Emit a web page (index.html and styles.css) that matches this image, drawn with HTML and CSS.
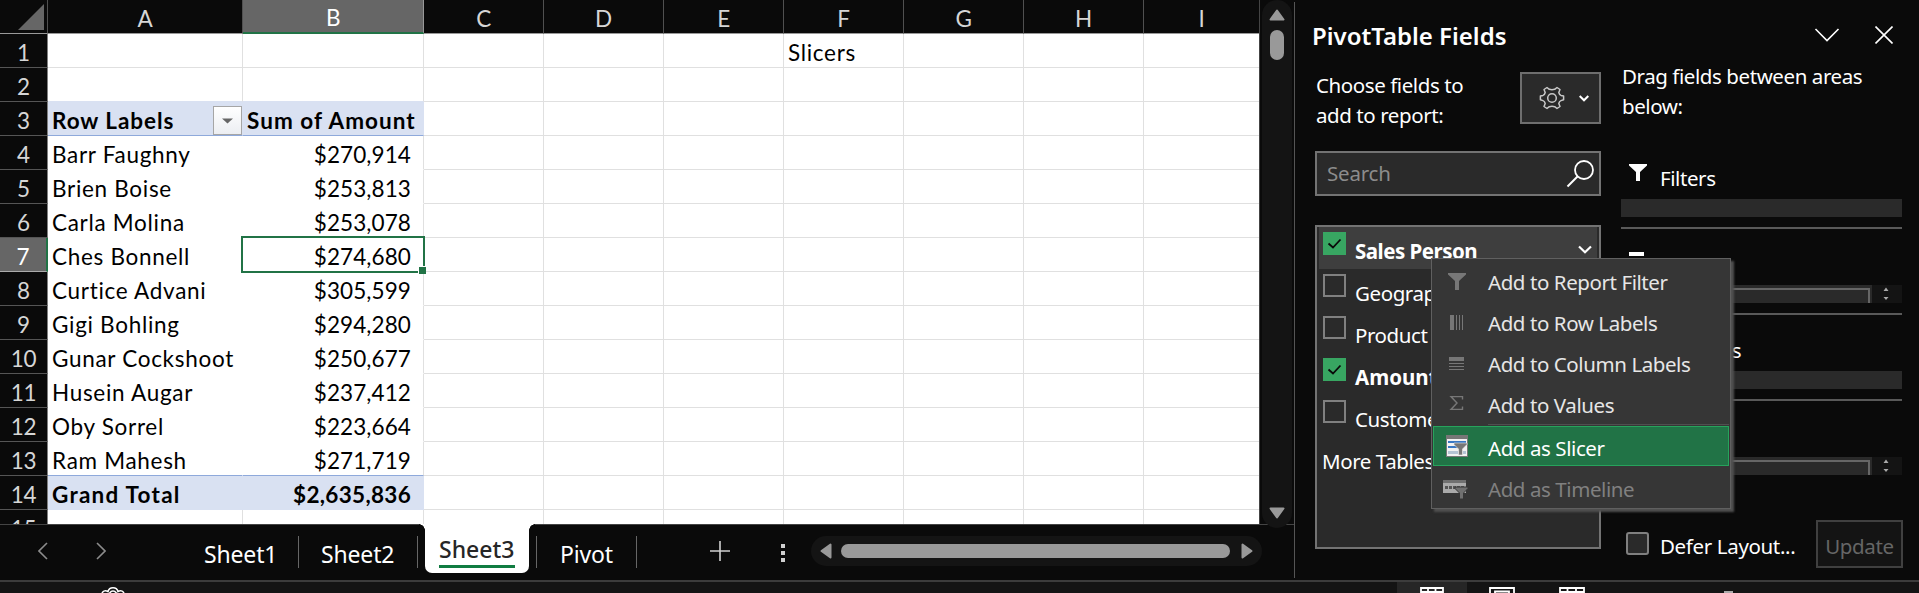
FILE: index.html
```html
<!DOCTYPE html>
<html lang="en">
<head>
<meta charset="utf-8">
<title>PivotTable Fields</title>
<link rel="stylesheet" href="styles.css">
</head>
<body>
<div class="app">
<main class="book">
  <div class="sheet-area">
    <div class="sheet">
      <table class="cells">
        <colgroup><col class="c-num"><col class="c-a"><col class="c-b"><col class="c-n"><col class="c-n"><col class="c-n"><col class="c-n"><col class="c-n"><col class="c-n"><col class="c-last"></colgroup>
        <tr class="head"><th class="corner"><svg width="48" height="33" viewBox="0 0 48 33"><path d="M44 4V30H18Z" fill="#666"/></svg></th><th>A</th><th class="picked">B</th><th>C</th><th>D</th><th>E</th><th>F</th><th>G</th><th>H</th><th>I</th></tr>
        <tr><th>1</th><td></td><td></td><td></td><td></td><td></td><td>Slicers</td><td></td><td></td><td></td></tr>
        <tr class="above"><th>2</th><td></td><td></td><td></td><td></td><td></td><td></td><td></td><td></td><td></td></tr>
        <tr class="band top"><th>3</th><td><div class="labelcell"><span>Row Labels</span><span class="filter"><svg width="27" height="27" viewBox="0 0 27 27"><path d="M8 11.500H19L13.500 16.500Z" fill="#666"/></svg></span></div></td><td class="hd">Sum of Amount</td><td></td><td></td><td></td><td></td><td></td><td></td><td></td></tr>
        <tr class="data"><th>4</th><td>Barr Faughny</td><td>$270,914</td><td></td><td></td><td></td><td></td><td></td><td></td><td></td></tr>
        <tr class="data"><th>5</th><td>Brien Boise</td><td>$253,813</td><td></td><td></td><td></td><td></td><td></td><td></td><td></td></tr>
        <tr class="data"><th>6</th><td>Carla Molina</td><td>$253,078</td><td></td><td></td><td></td><td></td><td></td><td></td><td></td></tr>
        <tr class="data"><th class="picked">7</th><td>Ches Bonnell</td><td class="active">$274,680</td><td></td><td></td><td></td><td></td><td></td><td></td><td></td></tr>
        <tr class="data"><th>8</th><td>Curtice Advani</td><td>$305,599</td><td></td><td></td><td></td><td></td><td></td><td></td><td></td></tr>
        <tr class="data"><th>9</th><td>Gigi Bohling</td><td>$294,280</td><td></td><td></td><td></td><td></td><td></td><td></td><td></td></tr>
        <tr class="data"><th>10</th><td>Gunar Cockshoot</td><td>$250,677</td><td></td><td></td><td></td><td></td><td></td><td></td><td></td></tr>
        <tr class="data"><th>11</th><td>Husein Augar</td><td>$237,412</td><td></td><td></td><td></td><td></td><td></td><td></td><td></td></tr>
        <tr class="data"><th>12</th><td>Oby Sorrel</td><td>$223,664</td><td></td><td></td><td></td><td></td><td></td><td></td><td></td></tr>
        <tr class="data end"><th>13</th><td>Ram Mahesh</td><td>$271,719</td><td></td><td></td><td></td><td></td><td></td><td></td><td></td></tr>
        <tr class="band total"><th>14</th><td>Grand Total</td><td>$2,635,836</td><td></td><td></td><td></td><td></td><td></td><td></td><td></td></tr>
        <tr><th>15</th><td></td><td></td><td></td><td></td><td></td><td></td><td></td><td></td><td></td></tr>
      </table>
    </div>
    <div class="vscroll">
      <svg width="16" height="12" viewBox="0 0 16 12"><path d="M8 1.500L14.500 10.500H1.500Z" class="arrow"/></svg>
      <i class="vthumb"></i>
      <svg class="down" width="16" height="12" viewBox="0 0 16 12"><path d="M8 10.500L14.500 1.500H1.500Z" class="arrow"/></svg>
    </div>
  </div>
  <div class="tabbar">
    <svg class="prev" width="10" height="18" viewBox="0 0 10 18"><path d="M9 1L1 9L9 17" class="nav"/></svg>
    <svg class="next" width="10" height="18" viewBox="0 0 10 18"><path d="M1 1L9 9L1 17" class="nav"/></svg>
    <span class="tab t1">Sheet1</span><span class="tab t2">Sheet2</span>
    <span class="tab on"><b>Sheet3</b></span>
    <span class="tab t4">Pivot</span>
    <svg class="plus" width="20" height="20" viewBox="0 0 20 20"><path d="M10 0V20M0 10H20" stroke="#d0d0d0" stroke-width="1.600"/></svg>
    <svg class="dots" width="4" height="20" viewBox="0 0 4 20"><path d="M0 1h4v4H0zM0 8h4v4H0zM0 15h4v4H0z" fill="#d0d0d0"/></svg>
    <div class="hscroll">
      <svg width="12" height="16" viewBox="0 0 12 16"><path d="M1.500 8L10.500 1.500V14.500Z" class="arrow"/></svg>
      <i class="hthumb"></i>
      <svg width="12" height="16" viewBox="0 0 12 16"><path d="M10.500 8L1.500 1.500V14.500Z" class="arrow"/></svg>
    </div>
  </div>
</main>

<aside class="pane">
  <header class="pane-head">
    <h1>PivotTable Fields</h1>
    <svg class="chev" width="26" height="14" viewBox="0 0 26 14"><path d="M1.500 1L13 12.500L24.500 1" fill="none" stroke="#fff" stroke-width="1.600"/></svg>
    <svg class="close" width="18" height="18" viewBox="0 0 18 18"><path d="M.5.500L17.500 17.500M17.500.500L.5 17.500" stroke="#fff" stroke-width="1.600"/></svg>
  </header>
  <div class="pane-body">
    <section class="fields">
      <div class="choose">
        <p>Choose fields to<br>add to report:</p>
        <div class="gear">
          <svg width="26" height="26" viewBox="-13 -13 26 26"><path d="M-5-10.500L-2.700-8.700Q0-7.800 2.700-8.700L5-10.500L8-8.500L6.800-5.500Q7.300-3.200 9-2.600L11.600-2V1.800L9 2.600Q7.300 3.200 6.800 5.500L8 8.500L5 10.500L2.700 8.700Q0 7.800-2.700 8.700L-5 10.500L-8 8.500L-6.800 5.500Q-7.300 3.200-9 2.600L-11.600 1.800V-2L-9-2.600Q-7.300-3.200-6.800-5.500L-8-8.500Z" class="gear-line"/><circle r="4.300" class="gear-line"/></svg>
          <svg class="gear-chev" width="10" height="7" viewBox="0 0 10 7"><path d="M.7 1L5 5.300L9.300 1" fill="none" stroke="#fff" stroke-width="2"/></svg>
        </div>
      </div>
      <div class="search"><span>Search</span>
        <svg width="28" height="28" viewBox="0 0 28 28"><circle cx="18" cy="10" r="9" fill="none" stroke="#fff" stroke-width="1.800"/><path d="M11.500 16.500L1.500 26.500" stroke="#fff" stroke-width="2"/></svg>
      </div>
      <div class="list">
        <div class="field sel"><i class="box on"><svg width="23" height="23" viewBox="0 0 23 23"><path d="M5.500 11.500L10 15.500L17.500 7.500" class="tick"/></svg></i><span>Sales Person</span><svg class="item-chev" width="14" height="9" viewBox="0 0 14 9"><path d="M1 1.500L7 7.200L13 1.500" fill="none" stroke="#fff" stroke-width="2.200"/></svg></div>
        <div class="field"><i class="box"></i><span>Geography</span></div>
        <div class="field"><i class="box"></i><span>Product</span></div>
        <div class="field"><i class="box on"><svg width="23" height="23" viewBox="0 0 23 23"><path d="M5.500 11.500L10 15.500L17.500 7.500" class="tick"/></svg></i><span class="strong">Amount</span></div>
        <div class="field"><i class="box"></i><span>Customers</span></div>
        <div class="field more"><span>More Tables...</span></div>
      </div>
    </section>
    <section class="areas">
      <p>Drag fields between areas<br>below:</p>
      <div class="area">
        <div class="area-name first"><svg width="18" height="17" viewBox="0 0 18 17"><path d="M0 0H18V1.500L11 8V17H7V8L0 1.500Z" fill="#fff"/></svg><span>Filters</span></div>
        <div class="well"></div>
      </div>
      <div class="area">
        <div class="area-name"><svg width="15" height="17" viewBox="0 0 15 17"><path d="M0 0H15V4H0zM0 7H15V8H0zM0 10H15V11H0z" fill="#fff"/></svg><span>Rows</span></div>
        <div class="well full"><i></i><svg width="6" height="14" viewBox="0 0 6 14"><path d="M3 .5L5.500 4H.5ZM3 13L5.500 10H.5Z" fill="#aaa"/></svg></div>
      </div>
      <div class="area">
        <div class="area-name"><svg width="15" height="17" viewBox="0 0 15 17"><path d="M0 0H4V15H0zM7 0H8V15H7zM10 0H11V15H10z" fill="#fff"/></svg><span>Columns</span></div>
        <div class="well"></div>
      </div>
      <div class="area last">
        <div class="area-name"><span>Values</span></div>
        <div class="well full"><i></i><svg width="6" height="14" viewBox="0 0 6 14"><path d="M3 .5L5.500 4H.5ZM3 13L5.500 10H.5Z" fill="#aaa"/></svg></div>
      </div>
      <div class="defer"><i class="box round"></i><span>Defer Layout...</span><button>Update</button></div>
    </section>
  </div>

  <div class="menu">
    <div class="mi"><svg width="24" height="24" viewBox="0 0 24 24"><path d="M3 3H21V4.500L14 11V20H10V11L3 4.500Z" fill="#777"/></svg><span>Add to Report Filter</span></div>
    <div class="mi"><svg width="24" height="24" viewBox="0 0 24 24"><path d="M5 4H9V19H5zM11 4h1V19h-1zM14 4h1V19h-1zM17 4h1V19h-1z" fill="#777"/></svg><span>Add to Row Labels</span></div>
    <div class="mi"><svg width="24" height="24" viewBox="0 0 24 24"><path d="M4 5H19V9H4zM4 11H19v1H4zM4 14H19v1H4zM4 17H19v1H4z" fill="#777"/></svg><span>Add to Column Labels</span></div>
    <div class="mi"><svg width="24" height="24" viewBox="0 0 24 24"><path d="M17.500 7.500V4.600H6L12 11L6 17.400H17.500V14.500" fill="none" stroke="#777" stroke-width="1.400"/></svg><span>Add to Values</span></div>
    <hr>
    <div class="mi hot"><svg width="24" height="24" viewBox="0 0 24 24"><path d="M1 1H23V23H1z" fill="#777"/><path d="M2 5H22V22H2z" fill="#f2f2f2"/><path d="M3 7H21v2H3zM3 12H14v2H3z" fill="#3a78c3"/><path d="M3 17H13v3H3zM18 17h3v3h-3z" fill="#b4c4d4"/><path d="M9 9H22V10.500L17.500 15V21H13.500V15L9 10.500Z" fill="#777" stroke="#eee" stroke-width=".6"/></svg><span>Add as Slicer</span></div>
    <div class="mi off"><svg width="26" height="24" viewBox="0 0 26 24"><path d="M0 4H23V17H0z" fill="#aaa"/><path d="M0 4H23V7H0z" fill="#707070"/><path d="M2 10h3v3H2zM6 10h3v3H6zM10 10h3v3h-3zM14 10h3v3h-3zM18 10h3v3h-3z" fill="#555"/><path d="M12 11H25V12.500L20.500 17V23H16.500V17L12 12.500Z" fill="#707070" stroke="#363636"/></svg><span>Add as Timeline</span></div>
  </div>
</aside>

<footer class="status">
  <svg class="person" width="24" height="6" viewBox="0 0 24 6"><path d="M1 6Q3 2.500 7 4.500Q8 .8 12 .8Q16 .8 17 4.500Q21 2.500 23 6M8.500 6Q12 2 15.500 6" fill="none" stroke="#fff" stroke-width="1.600"/></svg>
  <span class="view cur"><svg width="24" height="6" viewBox="0 0 24 6"><path d="M1 6V1H23V6M8 1V6M15.500 1V6M1 5H23" class="vi"/></svg></span>
  <span class="view"><svg width="26" height="6" viewBox="0 0 26 6"><path d="M1 6V1H25V6M6 6V4.500H20V6" class="vi"/></svg></span>
  <span class="view"><svg width="26" height="6" viewBox="0 0 26 6"><path d="M1 6V1H25V6M8.500 6V1M17 6V1M1 5H25" class="vi"/></svg></span>
  <i class="zoom"></i>
</footer>
</div>
</body>
</html>
```
FILE: styles.css
```css
*, *::before, *::after { box-sizing: border-box; }
body { margin: 0; background: #0a0a0a; color: #fff; font-family: "Noto Sans", "Open Sans", sans-serif; overflow: hidden; }
svg { display: block; flex: none; }
p, h1 { margin: 0; }
i { font-style: normal; }
.app { display: grid; grid-template: 580px 13px / 1294px 625px; width: 1919px; height: 593px; overflow: hidden; }

/* worksheet */
.book { display: flex; flex-direction: column; height: 580px; }
.sheet-area { display: flex; height: 524px; }
.sheet { width: 1260px; height: 524px; overflow: hidden; background: #fff; border-right: 1px solid #444; }
.cells { table-layout: fixed; width: 1260px; border-collapse: separate; border-spacing: 0; color: #000; font: 22.5px/33px "Lato", "Open Sans", sans-serif; letter-spacing: .7px; }
.c-num { width: 48px; } .c-a { width: 195px; } .c-b { width: 181px; } .c-n { width: 120px; } .c-last { width: 116px; }
.cells tr { height: 34px; }
.cells th, .cells td { height: 34px; padding: 4px 0 0; line-height: 29px; overflow: hidden; white-space: nowrap; }
.cells th { background: #0a0a0a; color: #d6d6d6; font-weight: 400; text-align: center; letter-spacing: -.3px; border-right: 1px solid #808080; border-bottom: 1px solid #555; }
.cells .head th { border-bottom-color: #999; border-right-color: #505050; }
.cells .head .corner { padding: 0; }
.cells td { padding-left: 4px; border-right: 1px solid #e0e0e0; border-bottom: 1px solid #e0e0e0; }
.cells td:last-child { border-right: 0; }
.cells .picked { background: #666; color: #fff; border-right: 1px solid #999; }
.cells .head .picked { border-bottom: 2px solid #217346; line-height: 28px; border-right-color: #999; }
.data th.picked { border-right: 2px solid #217346; border-bottom-color: #aaa; }
.data td:nth-child(2), .data td:nth-child(3) { border-bottom-color: transparent; }
.data td:nth-child(2) { border-right-color: transparent; }
.data td:nth-child(3), .total td:nth-child(3) { text-align: right; padding-right: 12px; letter-spacing: .1px; }
.above td:nth-child(2), .above td:nth-child(3) { border-bottom-color: #d9e1f2; }
.band td:nth-child(2), .band td:nth-child(3) { background: #d9e1f2; border-color: #d9e1f2; font-weight: 700; }
.top td:nth-child(2), .top td:nth-child(3), .end td:nth-child(2), .end td:nth-child(3) { border-bottom-color: #8ea9db; }
.top td:nth-child(2) { letter-spacing: .95px; }
.total td:nth-child(2) { letter-spacing: 1.250px; }
.total td:nth-child(3) { letter-spacing: .3px; }
.top .hd { letter-spacing: 1.050px; }
.labelcell { display: flex; justify-content: space-between; height: 29px; }
.filter { width: 29px; height: 29px; background: linear-gradient(#fff, #eceef2); border: 1px solid #a6a6a6; }
.cells .active { position: relative; overflow: visible; }
.active::before { content: ""; position: absolute; left: -2px; top: -2px; width: 184px; height: 37px; border: 2px solid #217346; }
.active::after { content: ""; position: absolute; left: 175px; top: 28px; width: 8px; height: 8px; background: #217346; border: solid #fff; border-width: 1px 0 0 1px; }

.vscroll { width: 30px; height: 528px; margin-left: 2px; padding: 9px 7px; background: #141414; border-radius: 15px; display: flex; flex-direction: column; align-items: center; position: relative; }
.vthumb { width: 14px; height: 30px; margin-top: 9px; border-radius: 7px; background: #999; }
.down { margin-top: auto; }
.arrow { fill: #999; stroke: #999; stroke-width: 2; stroke-linejoin: round; }

/* sheet tabs */
.tabbar { height: 56px; border-top: 1px solid #444; display: flex; align-items: flex-start; font-size: 23px; line-height: 32px; }
.nav { fill: none; stroke: #8c8c8c; stroke-width: 1.600; }
.prev { margin: 17px 0 0 38px; }
.next { margin: 17px 0 0 48px; }
.tab { margin-top: 11px; height: 32px; padding-top: 2px; border-right: 1px solid #666; letter-spacing: -.15px; white-space: nowrap; }
.t1 { width: 95px; margin-left: 98px; }
.t2 { width: 119px; padding-left: 22px; }
.tab.on { position: relative; width: 104px; height: 49px; margin: -1px 0 0 7px; padding: 14px 14px 0; border: 0; border-radius: 0 0 7px 7px; background: #fff; color: #262626; letter-spacing: 0; }
.tab.on::before, .tab.on::after { content: ""; position: absolute; top: 0; width: 6px; height: 6px; }
.tab.on::before { left: -6px; background: radial-gradient(circle at 0 100%, #0a0a0a 5.500px, #fff 6px); }
.tab.on::after { right: -6px; background: radial-gradient(circle at 100% 100%, #0a0a0a 5.500px, #fff 6px); }
.tab b { display: block; height: 30px; line-height: 23px; font-weight: 500; border-bottom: 3px solid #107c41; }
.t4 { width: 101px; margin-left: 7px; padding-left: 23px; border-left: 1px solid #666; }
.plus { margin: 16px 0 0 73px; }
.dots { margin: 18px 0 0 51px; }
.hscroll { width: 451px; height: 30px; margin: 11px 0 0 26px; padding: 0 9px; border-radius: 15px; background: #141414; display: flex; align-items: center; justify-content: space-between; }
.hthumb { width: 389px; height: 14px; margin-right: 2px; border-radius: 7px; background: #999; }

/* task pane */
.pane { position: relative; height: 576px; margin-top: 2px; border-left: 1px solid #555; padding-left: 20px; font-size: 20.500px; letter-spacing: -.42px; }
.pane-head { height: 62px; display: flex; padding-top: 17px; }
.pane-head h1 { width: 500px; margin-left: -3px; font-size: 24px; line-height: 34px; font-weight: 600; letter-spacing: 0; white-space: nowrap; }
.chev { margin: 9px 0 0 2px; }
.close { margin: 7px 0 0 35px; }
.pane-body { display: flex; }
.fields { width: 286px; margin-right: 20px; }
.choose { height: 87px; display: flex; justify-content: space-between; align-items: flex-start; }
.choose p { padding: 6px 0 0 1px; line-height: 30px; white-space: nowrap; }
.gear { width: 81px; height: 52px; margin-top: 8px; background: #2a2a2a; border: 2px solid #6e6e6e; display: flex; align-items: center; padding-left: 17px; }
.gear-line { fill: none; stroke: #c8c8c8; stroke-width: 1.500; stroke-linejoin: round; }
.gear-chev { margin-left: 14px; }
.search { height: 45px; background: #2a2a2a; border: 2px solid #737373; display: flex; justify-content: space-between; align-items: center; padding: 0 5px 0 10px; color: #8c8c8c; letter-spacing: -.2px; }
.search span { padding-bottom: 2px; }
.list { height: 324px; margin-top: 29px; background: #2a2a2a; border: 2px solid #737373; padding: 0 2px; overflow: hidden; }
.field { height: 42px; display: flex; align-items: flex-start; padding: 5px 4px 0; line-height: 38px; }
.field span { margin-left: 9px; white-space: nowrap; }
.field.sel { background: #3e3e3e; font-weight: 700; letter-spacing: -.5px; }
.strong { font-weight: 700; letter-spacing: 0; }
.field.more span { margin-left: -1px; }
.box { width: 23px; height: 23px; flex: none; border: 2px solid #808080; background: #2a2a2a; }
.box.on { border: 0; background: #38a662; }
.box.round { border-radius: 3px; }
.tick { fill: none; stroke: #0a0a0a; stroke-width: 1.800; }
.item-chev { margin: 13px 1px 0 auto; }

.areas { width: 284px; }
.areas > p { height: 87px; margin-top: -3px; padding-left: 1px; line-height: 30px; white-space: nowrap; }
.area { width: 281px; height: 86px; display: flex; flex-direction: column; border-bottom: 2px solid #595959; }
.area:nth-of-type(1) { height: 81px; }
.area-name { height: 56px; display: flex; padding: 23px 0 0 8px; line-height: 30px; }
.area-name.first { height: 51px; padding-top: 16px; }
.area-name span { margin: -3px 0 0 15px; }
.area-name.first span { margin: -1px 0 0 13px; }
.well { height: 18px; background: #2a2a2a; }
.well.full { display: flex; align-items: center; background: #141414; }
.well.full i { width: 251px; height: 18px; margin-right: 11px; background: #2a2a2a; border: solid #2a2a2a; border-width: 3px 2px 0 0; box-shadow: inset -2px 2px #666; }
.area.last { border: 0; height: 119px; }
.defer { width: 282px; display: flex; align-items: flex-start; line-height: 30px; }
.defer .box { margin: 12px 11px 0 5px; }
.defer span { padding-top: 11px; letter-spacing: -.35px; white-space: nowrap; }
.defer button { width: 87px; height: 48px; margin-left: auto; padding: 3px 0 0; background: #141414; border: 2px solid #404040; color: #666; font: inherit; letter-spacing: -.35px; }

/* context menu */
.menu { position: absolute; left: 136px; top: 256px; width: 300px; height: 251px; padding: 2px 1px; background: #363636; border: 1px solid #606060; box-shadow: 3px 3px 2px #505050; }
.menu hr { height: 1px; margin: 0 0 1px 55px; border: 0; background: #505050; }
.mi { height: 41px; display: flex; align-items: center; padding-left: 12px; line-height: 41px; color: #e6e6e6; }
.mi span { margin-left: 19px; padding-top: 2px; white-space: nowrap; }
.mi:nth-child(4) { height: 40px; }
.mi.hot { height: 40px; margin-bottom: 1px; background: #217346; border: 1px solid #27a35c; color: #fff; padding-left: 11px; }
.mi.hot span { padding-top: 4px; }
.mi.off { color: #808080; padding-left: 10px; }
.mi.off span { padding-top: 3px; }

/* status bar */
.status { grid-column: 1 / 3; height: 13px; border-top: 2px solid #3c3c3c; background: #141414; display: flex; overflow: hidden; }
.person { margin: 5px 1272px 0 101px; }
.view { width: 70px; height: 11px; display: flex; justify-content: center; padding-top: 5px; }
.view.cur { background: #262626; }
.vi { fill: none; stroke: #fff; stroke-width: 1.800; }
.zoom { width: 9px; height: 3px; margin: 9px 0 0 117px; background: #aaa; }
```
